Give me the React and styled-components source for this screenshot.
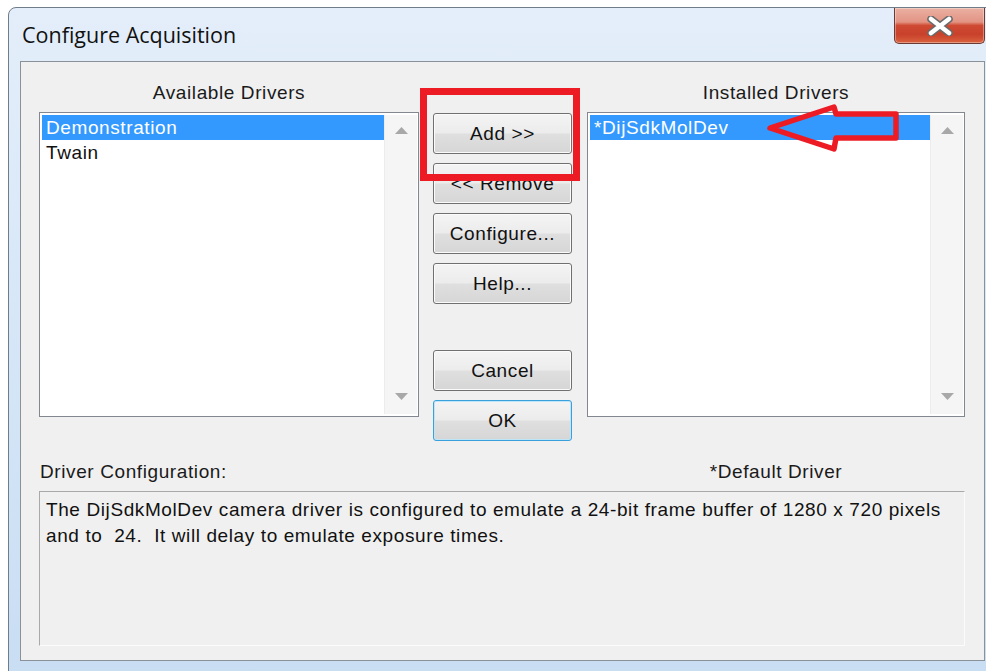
import React from 'react'
import styled, { createGlobalStyle } from 'styled-components'

const GlobalStyle = createGlobalStyle`
  html, body {
    margin: 0;
    padding: 0;
    background: #fff;
    overflow: hidden;
  }
  body {
    font-family: "Liberation Sans", Arial, sans-serif;
    color: #000;
  }
`

const leftItems = [
  { name: 'Demonstration', selected: true },
  { name: 'Twain' },
]

const rightItems = [{ name: '*DijSdkMolDev', selected: true }]

const App = () => {
  return (
    <Page>
      <GlobalStyle />
      <Window>
        <TitleBar>
          <Title>Configure Acquisition</Title>
          <CloseButton>
            <svg width="26" height="20" viewBox="0 0 26 20">
              <path d="M4 3 L22 17 M22 3 L4 17" stroke="#6a6a6a" strokeWidth="7.5" strokeLinecap="round" />
              <path d="M4 3 L22 17 M22 3 L4 17" stroke="#fff" strokeWidth="4.5" strokeLinecap="round" />
            </svg>
          </CloseButton>
        </TitleBar>

        <Client>
          <Body>
            <ColumnLabel>Available Drivers</ColumnLabel>
            <div />
            <ColumnLabel>Installed Drivers</ColumnLabel>

            <DriverList items={leftItems} />

            <ButtonStack>
              <Highlight />
              <Button>Add &gt;&gt;</Button>
              <Button>&lt;&lt; Remove</Button>
              <Button>Configure...</Button>
              <Button>Help...</Button>
              <Button $space={37}>Cancel</Button>
              <Button $default>OK</Button>
            </ButtonStack>

            <DriverList items={rightItems}>
              <Pointer width="140" height="52" viewBox="0 0 140 52">
                <polygon
                  points="7,25 71,4 73,11 133,11 133,35 73,35 71,46"
                  fill="none"
                  stroke="#ed1c24"
                  strokeWidth="5.5"
                  strokeLinejoin="round"
                />
              </Pointer>
            </DriverList>

            <FooterLabel>Driver Configuration:</FooterLabel>
            <div />
            <FooterLabel $center>*Default Driver</FooterLabel>

            <ConfigBox>
              {'The DijSdkMolDev camera driver is configured to emulate a 24-bit frame buffer of 1280 x 720 pixels\nand to  24.  It will delay to emulate exposure times.'}
            </ConfigBox>
          </Body>
        </Client>
      </Window>
    </Page>
  )
}

const DriverList = ({ items, children }) => (
  <ListBox>
    <Items>
      {items.map((item) => (
        <Item key={item.name} $selected={item.selected}>
          {item.name}
        </Item>
      ))}
    </Items>
    <ScrollTrack>
      <svg width="13" height="7" viewBox="0 0 13 7">
        <polygon points="6.5,0 13,7 0,7" fill="#a8a8a8" />
      </svg>
      <svg width="13" height="7" viewBox="0 0 13 7">
        <polygon points="0,0 13,0 6.5,7" fill="#a8a8a8" />
      </svg>
    </ScrollTrack>
    {children}
  </ListBox>
)

export default App

const dialogText = `
  font-family: "Liberation Sans", Arial, sans-serif;
  font-size: 19px;
  letter-spacing: 0.6px;
`

const Page = styled.div`
  width: 986px;
  height: 671px;
  overflow: hidden;
  padding: 7px 0 0 8px;
  box-sizing: border-box;
`

const Window = styled.div`
  width: 989px;
  box-sizing: border-box;
  border: 1px solid #6f7c89;
  border-radius: 8px 8px 0 0;
  padding: 0 11px 12px 11px;
  background: linear-gradient(180deg, #e4eefa 0%, #d7e7f8 45%, #c9ddf3 100%);
`

const TitleBar = styled.div`
  height: 53px;
  display: flex;
  justify-content: space-between;
  align-items: flex-start;
`

const Title = styled.div`
  padding: 14px 0 0 2px;
  font-family: "Open Sans", "Noto Sans", sans-serif;
  font-size: 21.5px;
  line-height: 26px;
  color: #111;
`

const CloseButton = styled.div`
  width: 91px;
  height: 36px;
  box-sizing: border-box;
  border: 1px solid #6b3b33;
  border-top: none;
  border-radius: 0 0 5px 5px;
  display: flex;
  align-items: center;
  justify-content: center;
  background: linear-gradient(
    180deg,
    #eab0a3 0%,
    #e29483 40%,
    #cf4a33 50%,
    #c8412b 75%,
    #d9623f 100%
  );
  box-shadow: inset 0 0 0 1px rgba(255, 255, 255, 0.35);
`

const Client = styled.div`
  height: 600px;
  box-sizing: border-box;
  border: 1px solid #8a9199;
  background: #f0f0f0;
`

const Body = styled.div`
  display: grid;
  grid-template-columns: 380px 140px 378px;
  grid-template-rows: 30px 305px 74px 155px;
  column-gap: 14px;
  padding: 20px 0 0 18px;
`

const ColumnLabel = styled.div`
  ${dialogText}
  text-align: center;
  line-height: 22px;
  color: #1a1a1a;
`

const ListBox = styled.div`
  position: relative;
  display: flex;
  height: 305px;
  box-sizing: border-box;
  padding: 2px 1px 2px 2px;
  background: #fff;
  border: 1px solid #828790;
`

const Items = styled.div`
  flex: 1;
`

const Item = styled.div`
  ${dialogText}
  height: 25px;
  line-height: 25px;
  padding-left: 4px;
  background: ${(p) => (p.$selected ? '#3399ff' : 'transparent')};
  color: ${(p) => (p.$selected ? '#fff' : '#111')};
`

const ScrollTrack = styled.div`
  width: 33px;
  box-sizing: border-box;
  display: flex;
  flex-direction: column;
  justify-content: space-between;
  align-items: center;
  padding: 12px 0 14px;
  background: #f5f5f5;
  border-left: 1px solid #ececec;
`

const ButtonStack = styled.div`
  position: relative;
  display: flex;
  flex-direction: column;
  gap: 9px;
  padding-top: 1px;
`

const Button = styled.div`
  ${dialogText}
  flex-shrink: 0;
  width: 139px;
  height: 41px;
  box-sizing: border-box;
  margin-top: ${(p) => p.$space || 0}px;
  display: flex;
  align-items: center;
  justify-content: center;
  color: #111;
  border: 1px solid ${(p) => (p.$default ? '#3aa0dc' : '#707070')};
  border-radius: 3px;
  background: linear-gradient(180deg, #f4f4f4 0%, #ececec 48%, #dfdfdf 52%, #d6d6d6 100%);
  box-shadow: inset 0 0 0 1px ${(p) => (p.$default ? '#bfe5f8' : '#fbfbfb')};
`

const Highlight = styled.div`
  position: absolute;
  left: -13px;
  top: -24px;
  width: 160px;
  height: 93px;
  box-sizing: border-box;
  border: 7px solid #ed1c24;
  z-index: 2;
  pointer-events: none;
`

const Pointer = styled.svg`
  position: absolute;
  left: 175px;
  top: -10px;
  overflow: visible;
  pointer-events: none;
`

const FooterLabel = styled.div`
  ${dialogText}
  align-self: end;
  margin-bottom: 8px;
  padding-left: ${(p) => (p.$center ? 0 : 1)}px;
  text-align: ${(p) => (p.$center ? 'center' : 'left')};
  line-height: 22px;
  color: #1a1a1a;
`

const ConfigBox = styled.div`
  ${dialogText}
  grid-column: 1 / -1;
  box-sizing: border-box;
  padding: 5px 6px;
  line-height: 26px;
  white-space: pre-wrap;
  color: #111;
  background: #f0f0f0;
  border: 1px solid;
  border-color: #a9a9a9 #fbfbfb #fbfbfb #a9a9a9;
`
